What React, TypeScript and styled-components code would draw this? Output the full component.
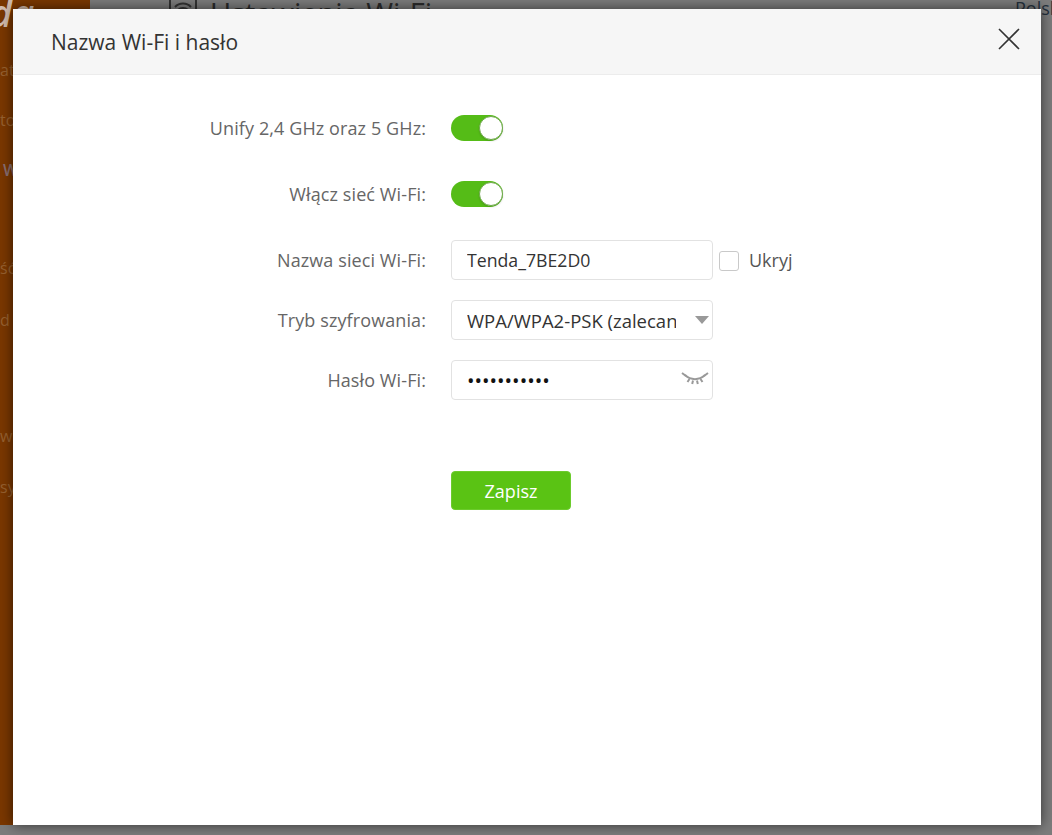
import React from "react";
import styled, { createGlobalStyle } from "styled-components";

const Global = createGlobalStyle`
  html, body { margin: 0; padding: 0; height: 100%; background: #7c7c7c; }
  body { font-family: "Open Sans", "Noto Sans", "Liberation Sans", sans-serif; overflow: hidden; }
  #root { height: 100%; }
`;

const Page = styled.div`
  position: relative;
  width: 1052px;
  height: 835px;
  overflow: hidden;
  display: flex;
  align-items: flex-start;
  background: #7c7c7c;
`;

const Sidebar = styled.aside`
  width: 90px;
  height: 825px;
  flex: none;
  overflow: hidden;
  background: #7a3700;
  display: flex;
  flex-direction: column;
`;

const SideLogo = styled.div`
  height: 58px;
  flex: none;
  margin-left: -72px;
  font-size: 38px;
  font-weight: 600;
  line-height: 24px;
  font-style: italic;
  color: #d2bcae;
  white-space: nowrap;
`;

const SideItem = styled.div<{ $h: number; $on?: boolean }>`
  height: ${(p) => p.$h}px;
  flex: none;
  font-size: 16px;
  line-height: 24px;
  color: ${(p) => (p.$on ? "#8a6f70" : "#96602f")};
  font-weight: ${(p) => (p.$on ? 600 : 400)};
  white-space: nowrap;
  text-indent: ${(p) => (p.$on ? 3 : 0)}px;
`;

const Main = styled.main`
  flex: 1;
  display: flex;
  justify-content: space-between;
  align-items: flex-start;
  padding-left: 79px;
  margin-top: -7px;
  color: #2b2b2b;
`;

const PageTitle = styled.div`
  display: flex;
  align-items: center;
  gap: 13px;
  font-size: 29px;
  line-height: 40px;
  white-space: nowrap;
`;

const Lang = styled.div`
  font-size: 18px;
  line-height: 24px;
  margin-top: 3px;
  width: 37px;
  overflow: hidden;
  white-space: nowrap;
  color: #24303c;
`;

const Modal = styled.section`
  position: absolute;
  left: 13px;
  top: 9px;
  width: 1028px;
  height: 816px;
  background: #fff;
  box-shadow: 0 0 12px rgba(0, 0, 0, 0.6);
  display: flex;
  flex-direction: column;
`;

const Header = styled.header`
  height: 66px;
  box-sizing: border-box;
  flex: none;
  background: #f6f6f6;
  border-bottom: 1px solid #ececec;
  padding: 0 21px 0 38px;
  display: flex;
  align-items: center;
  justify-content: space-between;
`;

const Title = styled.h1`
  margin: 0;
  font-size: 21px;
  font-weight: 400;
  color: #333;
`;

const CloseButton = styled.button`
  width: 22px;
  height: 22px;
  border: 0;
  background: none;
  padding: 0;
  margin-top: -5px;
  display: block;
`;

const Form = styled.form`
  padding-top: 40px;
  display: flex;
  flex-direction: column;
  margin: 0;
`;

const Row = styled.div<{ $h: number; $mb: number }>`
  display: flex;
  align-items: center;
  height: ${(p) => p.$h}px;
  margin-bottom: ${(p) => p.$mb}px;
`;

const Label = styled.label`
  width: 413px;
  flex: none;
  margin-right: 25px;
  text-align: right;
  font-size: 18px;
  letter-spacing: 0.1px;
  color: #666;
`;

const Toggle = styled.span`
  width: 52px;
  height: 26px;
  border-radius: 13px;
  background: #55bc17;
  display: flex;
  justify-content: flex-end;
  align-items: center;
`;

const Knob = styled.span`
  width: 24px;
  height: 24px;
  box-sizing: border-box;
  border-radius: 50%;
  background: #fff;
  border: 1px solid #6fa84c;
  box-shadow: 0 1px 2px rgba(0, 0, 0, 0.15);
`;

const FieldBox = styled.div`
  position: relative;
  width: 262px;
  height: 40px;
  box-sizing: border-box;
  border: 1px solid #e2e2e2;
  border-radius: 4px;
  background: #fff;
  display: flex;
  align-items: center;
  padding-left: 15px;
`;

const TextInput = styled.input`
  border: 0;
  outline: 0;
  padding: 0;
  background: transparent;
  width: 210px;
  font-family: inherit;
  font-size: 17.7px;
  color: #333;
`;

const PasswordInput = styled(TextInput)`
  color: #111;
  font-size: 20px;
  padding-top: 1px;
`;

const SelectText = styled.div`
  width: 209px;
  overflow: hidden;
  white-space: nowrap;
  font-size: 18.5px;
  color: #333;
`;

const Caret = styled.span`
  position: absolute;
  right: 3px;
  top: 15px;
  width: 0;
  height: 0;
  border-left: 7px solid transparent;
  border-right: 7px solid transparent;
  border-top: 8px solid #999;
`;

const EyeIcon = styled.svg`
  position: absolute;
  right: 3px;
  top: 10px;
`;

const CheckBox = styled.span`
  width: 20px;
  height: 20px;
  box-sizing: border-box;
  border: 1px solid #c9c9c9;
  border-radius: 3px;
  margin: 2px 0 0 6px;
  background: #fff;
`;

const CheckLabel = styled.span`
  margin-left: 10px;
  font-size: 18px;
  color: #555;
`;

const SaveButton = styled.button`
  width: 120px;
  height: 39px;
  border: 1px solid #6ccb2d;
  border-radius: 4px;
  background: #5ac314;
  color: #fff;
  font-family: inherit;
  font-size: 18px;
  margin: 0;
  padding: 0;
`;

const ButtonRow = styled.div`
  padding: 71px 0 0 438px;
`;

const sideItems: [string, number, boolean?][] = [
  ["atu", 50],
  ["to", 50],
  ["Wi", 98, true],
  ["ść", 52],
  ["d", 116],
  ["wa", 51],
  ["sy", 60],
];

export default function App() {
  return (
    <Page>
      <Global />
      <Sidebar>
        <SideLogo>Tenda</SideLogo>
        {sideItems.map(([t, h, on]) => (
          <SideItem key={t} $h={h} $on={on}>{t}</SideItem>
        ))}
      </Sidebar>
      <Main>
        <PageTitle>
          <svg width="28" height="36" viewBox="0 0 28 36" fill="none" stroke="#333" strokeWidth="2">
            <rect x="1" y="1" width="26" height="34" rx="2" />
            <path d="M6 12a11 11 0 0 1 16 0M9 15a7 7 0 0 1 10 0" />
          </svg>
          Ustawienia Wi-Fi
        </PageTitle>
        <Lang>Polski</Lang>
      </Main>
      <Modal>
        <Header>
          <Title>Nazwa Wi-Fi i hasło</Title>
          <CloseButton type="button" aria-label="Zamknij">
            <svg width="22" height="22" viewBox="0 0 22 22" stroke="#333" strokeWidth="1.6" fill="none">
              <path d="M1 1l20 20M21 1L1 21" />
            </svg>
          </CloseButton>
        </Header>
        <Form>
          <Row $h={26} $mb={40}>
            <Label>Unify 2,4 GHz oraz 5 GHz:</Label>
            <Toggle><Knob /></Toggle>
          </Row>
          <Row $h={26} $mb={33}>
            <Label>Włącz sieć Wi-Fi:</Label>
            <Toggle><Knob /></Toggle>
          </Row>
          <Row $h={40} $mb={20}>
            <Label>Nazwa sieci Wi-Fi:</Label>
            <FieldBox><TextInput readOnly value="Tenda_7BE2D0" /></FieldBox>
            <CheckBox />
            <CheckLabel>Ukryj</CheckLabel>
          </Row>
          <Row $h={40} $mb={20}>
            <Label>Tryb szyfrowania:</Label>
            <FieldBox>
              <SelectText>WPA/WPA2-PSK (zalecane)</SelectText>
              <Caret />
            </FieldBox>
          </Row>
          <Row $h={40} $mb={0}>
            <Label>Hasło Wi-Fi:</Label>
            <FieldBox>
              <PasswordInput readOnly type="password" value="12345678901" />
              <EyeIcon width="28" height="16" viewBox="0 0 28 16" fill="none" stroke="#999" strokeWidth="2">
                <path d="M4 4c6 5.500 14 5.500 20 0" />
                <path d="M1 2l4 3M27 2l-4 3M8.500 8l-2 3M19.500 8l2 3M12 9.500l-.8 3.500M16 9.500l.8 3.500" />
              </EyeIcon>
            </FieldBox>
          </Row>
          <ButtonRow>
            <SaveButton type="button">Zapisz</SaveButton>
          </ButtonRow>
        </Form>
      </Modal>
    </Page>
  );
}
